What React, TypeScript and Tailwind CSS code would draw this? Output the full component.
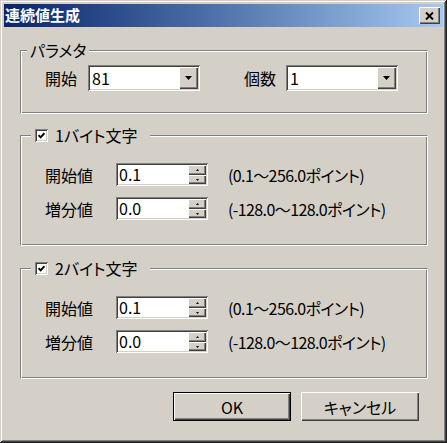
import React from "react";

const FONT =
  "font-['Noto_Sans_CJK_JP','Noto_Sans_CJK_SC',sans-serif] [font-feature-settings:'palt']";
const RAISED =
  "shadow-[inset_1px_1px_#ffffff,inset_-1px_-1px_#404040,inset_-2px_-2px_#808080]";
const SUNKEN =
  "shadow-[inset_1px_1px_#808080,inset_-1px_-1px_#ffffff,inset_2px_2px_#404040,inset_-2px_-2px_#d4d0c8]";

function DownTri() {
  return (
    <svg width="7" height="4" viewBox="0 0 7 4">
      <polygon points="0,0 7,0 3.5,4" fill="#000" />
    </svg>
  );
}

function Combo({ value }: { value: string }) {
  return (
    <div className={`flex h-[26px] w-[112px] bg-white p-[2px] ${SUNKEN}`}>
      <div className="flex-1 pl-[2px] text-[16px] leading-[22px] text-black">{value}</div>
      <div className={`flex w-[19px] items-center justify-center bg-[#d4d0c8] ${RAISED}`}>
        <DownTri />
      </div>
    </div>
  );
}

function SpinBox({ value }: { value: string }) {
  return (
    <div className={`flex h-[23px] w-[92px] bg-white p-[2px] ${SUNKEN}`}>
      <div className="flex-1 pl-[1px] text-[16px] leading-[19px] text-black">{value}</div>
      <div className="flex w-[18px] flex-col">
        <div className={`flex h-[10px] items-center justify-center bg-[#d4d0c8] ${RAISED}`}>
          <svg width="3" height="2" viewBox="0 0 3 2">
            <polygon points="1.5,0 3,2 0,2" fill="#000" />
          </svg>
        </div>
        <div className={`flex h-[9px] items-center justify-center bg-[#d4d0c8] ${RAISED}`}>
          <svg width="3" height="2" viewBox="0 0 3 2">
            <polygon points="0,0 3,0 1.5,2" fill="#000" />
          </svg>
        </div>
      </div>
    </div>
  );
}

function CheckBox() {
  return (
    <div className={`flex h-[13px] w-[13px] items-center justify-center bg-white ${SUNKEN}`}>
      <svg width="7" height="7" viewBox="0 0 7 7">
        <path d="M0.6 3.2 L2.7 5.4 L6.4 1.2" stroke="#000" strokeWidth="1.9" fill="none" />
      </svg>
    </div>
  );
}

const GROUP =
  "border border-t-[#808080] border-l-[#808080] border-r-white border-b-white shadow-[inset_1px_1px_#ffffff,inset_-1px_-1px_#808080]";

function ByteGroup({ label, className }: { label: string; className: string }) {
  return (
    <div className={`h-[111px] w-[408px] ${GROUP} ${className}`}>
      <div className="-mt-[9px] flex h-[16px] pl-[10px]">
        <div className="flex w-[119px] items-center bg-[#d4d0c8] pl-[4px]">
          <CheckBox />
          <span className="ml-[7px] text-[16px] leading-[16px]">{label}</span>
        </div>
      </div>
      <div className="mt-[20px] flex h-[23px] items-center pl-[24px]">
        <span className="w-[71px] text-[16px] leading-[16px]">開始値</span>
        <SpinBox value="0.1" />
        <span className="ml-[20px] text-[16px] leading-[16px] tracking-[-0.6px]">(0.1～256.0ポイント)</span>
      </div>
      <div className="mt-[11px] flex h-[23px] items-center pl-[24px]">
        <span className="w-[71px] text-[16px] leading-[16px]">増分値</span>
        <SpinBox value="0.0" />
        <span className="ml-[20px] text-[16px] leading-[16px] tracking-[-0.6px]">(-128.0～128.0ポイント)</span>
      </div>
    </div>
  );
}

export default function App() {
  return (
    <div
      className={`h-[443px] w-[447px] bg-[#d4d0c8] p-[4px] text-black ${FONT} shadow-[inset_-1px_-1px_#202020,inset_1px_1px_#d4d0c8,inset_-2px_-2px_#404040,inset_2px_2px_#ffffff,inset_-3px_-3px_#808080]`}
    >
      {/* title bar */}
      <div className="flex h-[23px] items-start justify-between bg-linear-to-r from-[#0a246a] to-[#a6caf0]">
        <span className="pl-[1px] text-[15px] font-bold leading-[22px] text-white">連続値生成</span>
        <div
          className={`mr-[3px] mt-[3px] flex h-[17px] w-[21px] items-center justify-center bg-[#d4d0c8] ${RAISED}`}
        >
          <svg width="9" height="8" viewBox="0 0 9 8">
            <path d="M1 0.5 L8 7.5 M8 0.5 L1 7.5" stroke="#000" strokeWidth="2" fill="none" />
          </svg>
        </div>
      </div>

      <div className="pl-[16px]">
        {/* パラメタ */}
        <div className={`mt-[23px] h-[64px] w-[408px] ${GROUP}`}>
          <div className="-mt-[9px] flex h-[16px] pl-[6px]">
            <span className="bg-[#d4d0c8] px-[3px] text-[16px] leading-[16px]">パラメタ</span>
          </div>
          <div className="mt-[7px] flex h-[26px] items-center pl-[24px]">
            <span className="w-[43px] text-[16px] leading-[16px]">開始</span>
            <Combo value="81" />
            <span className="ml-[44px] w-[42px] text-[16px] leading-[16px]">個数</span>
            <Combo value="1" />
          </div>
        </div>

        <ByteGroup label="1バイト文字" className="mt-[21px]" />
        <ByteGroup label="2バイト文字" className="mt-[22px]" />

        <div className="mt-[13px] flex w-[408px] justify-end gap-[10px] pr-[9px]">
          <div
            className={`flex h-[29px] w-[118px] items-center justify-center border border-black bg-[#d4d0c8] text-[16px] ${RAISED}`}
          >
            OK
          </div>
          <div
            className={`flex h-[29px] w-[118px] items-center justify-center bg-[#d4d0c8] text-[16px] ${RAISED}`}
          >
            キャンセル
          </div>
        </div>
      </div>
    </div>
  );
}
